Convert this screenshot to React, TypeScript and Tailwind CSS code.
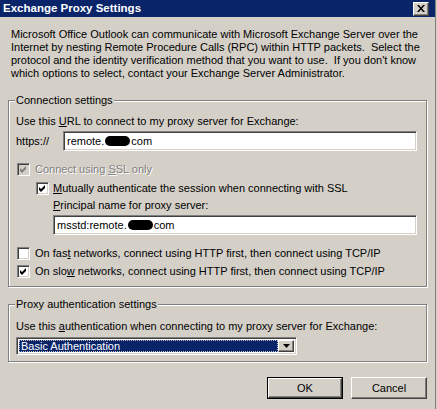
import React from 'react';

const sunken =
  'border border-t-[#808080] border-l-[#808080] border-b-white border-r-white shadow-[inset_1px_1px_0_#404040,inset_-1px_-1px_0_#d4d0c8]';
const raised =
  'border border-t-white border-l-white border-b-[#404040] border-r-[#404040] shadow-[inset_-1px_-1px_0_#808080,inset_1px_1px_0_#d4d0c8]';

function Check({ checked, disabled }: { checked: boolean; disabled?: boolean }) {
  return (
    <span
      className={`${sunken} inline-flex w-[13px] h-[13px] shrink-0 ${disabled ? 'bg-[#d4d0c8]' : 'bg-white'}`}
    >
      {checked && (
        <svg width="11" height="11" viewBox="0 0 11 11" className="block">
          <polygon
            points="2,4 4,6 8,2 8,5 4,9 2,7"
            fill={disabled ? '#808080' : '#000'}
          />
        </svg>
      )}
    </span>
  );
}

function Blot({ w }: { w: number }) {
  return (
    <span
      className="inline-block bg-black rounded-full h-[10px] align-middle mx-[1px]"
      style={{ width: w }}
    />
  );
}

function Group({ title, children }: { title: string; children: React.ReactNode }) {
  return (
    <fieldset className="border border-[#808080] shadow-[inset_1px_1px_0_#fff,1px_1px_0_#fff] pl-[7px] pr-[9px] pb-[8px]">
      <legend className="-ml-[1px] px-[1px] bg-[#d4d0c8] leading-[13px]">{title}</legend>
      {children}
    </fieldset>
  );
}

export default function App() {
  return (
    <div className="w-[437px] h-[409px] overflow-hidden bg-[#d4d0c8] text-[11px] leading-[13px] text-black font-['Liberation_Sans',Arial,sans-serif]">
      <div className="w-[436px] h-full border-r border-[#808080]">
        <div className="h-[17px] bg-[#0a246a] flex items-center justify-between pl-[3px] pr-[6px]">
          <span className="text-white font-bold text-[11.5px]">Exchange Proxy Settings</span>
          <span className={`${raised} bg-[#d4d0c8] w-[16px] h-[14px] flex items-center justify-center`}>
            <svg width="8" height="7" viewBox="0 0 8 7">
              <path d="M0 0h2l2 2.5L6 0h2L5 3.5 8 7H6L4 4.5 2 7H0l3-3.5z" fill="#000" />
            </svg>
          </span>
        </div>

        <div className="pl-[8px] pr-[8px]">
          <p className="mt-[11px] pl-[3px]">
            Microsoft Office Outlook can communicate with Microsoft Exchange Server over the Internet by
            nesting Remote Procedure Calls (RPC) within HTTP packets.&nbsp; Select the protocol and the
            identity verification method that you want to use.&nbsp; If you don't know which options to
            select, contact your Exchange Server Administrator.
          </p>

          <div className="mt-[14px]">
            <Group title="Connection settings">
              <div className="pt-[8px]">
                Use this <u>U</u>RL to connect to my proxy server for Exchange:
              </div>
              <div className="mt-[3px] flex items-center">
                <span className="w-[47px]">https://</span>
                <div className={`${sunken} bg-white h-[20px] flex-1 flex items-center pl-[3px]`}>
                  remote.<Blot w={25} />com
                </div>
              </div>
              <div className="mt-[12px] flex items-center gap-[5px] pl-[1px] text-[#808080] [text-shadow:1px_1px_0_#fff]">
                <Check checked disabled />
                <span>
                  Connect using <u>S</u>SL only
                </span>
              </div>
              <div className="mt-[6px] flex items-center gap-[4px] pl-[20px]">
                <Check checked />
                <span>
                  <u>M</u>utually authenticate the session when connecting with SSL
                </span>
              </div>
              <div className="mt-[4px] pl-[37px]">
                <u>P</u>rincipal name for proxy server:
              </div>
              <div className="mt-[3px] pl-[37px]">
                <div className={`${sunken} bg-white h-[20px] flex items-center pl-[3px]`}>
                  msstd:remote.<Blot w={25} />com
                </div>
              </div>
              <div className="mt-[12px] flex items-center gap-[5px] pl-[1px]">
                <Check checked={false} />
                <span>
                  On fas<u>t</u> networks, connect using HTTP first, then connect using TCP/IP
                </span>
              </div>
              <div className="mt-[5px] flex items-center gap-[5px] pl-[1px]">
                <Check checked />
                <span>
                  On slo<u>w</u> networks, connect using HTTP first, then connect using TCP/IP
                </span>
              </div>
            </Group>
          </div>

          <div className="mt-[11px]">
            <Group title="Proxy authentication settings">
              <div className="pt-[9px]">
                Use this <u>a</u>uthentication when connecting to my proxy server for Exchange:
              </div>
              <div className="mt-[4px]">
                <div className={`${sunken} bg-white w-[281px] h-[18px] flex p-[2px] -mb-[2px]`}>
                  <div className="flex-1 bg-[#0a246a] text-white border border-dotted border-[#c0c0c0] flex items-center pl-[1px] leading-[12px]">
                    Basic Authentication
                  </div>
                  <div className={`${raised} bg-[#d4d0c8] w-[16px] flex items-center justify-center`}>
                    <svg width="7" height="4" viewBox="0 0 7 4">
                      <path d="M0 0h7L3.5 4z" fill="#000" />
                    </svg>
                  </div>
                </div>
              </div>
            </Group>
          </div>

          <div className="mt-[15px] flex justify-end gap-[8px]">
            <button className="w-[76px] h-[22px] border border-black bg-[#d4d0c8]">
              <span className={`${raised} w-full h-full flex items-center justify-center`}>OK</span>
            </button>
            <button className={`${raised} w-[76px] h-[22px] bg-[#d4d0c8] flex items-center justify-center`}>
              Cancel
            </button>
          </div>
        </div>
      </div>
    </div>
  );
}
